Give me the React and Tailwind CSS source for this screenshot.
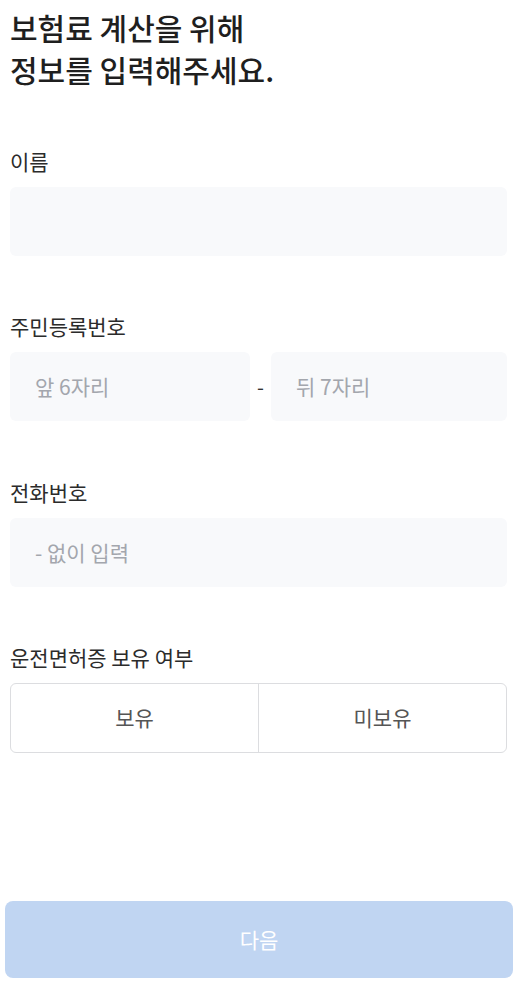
export default function App() {
  const font = { fontFamily: '"Noto Sans CJK KR", "Noto Sans", sans-serif' };

  return (
    <div
      className="flex min-h-[984px] w-[524px] flex-col bg-white"
      style={font}
    >
      <div className="flex flex-col pl-[10px] pr-[17px]">
        <h1 className="mt-[6px] text-[30px] font-medium leading-[42px] text-[#1f1f1f]">
          보험료 계산을 위해
          <br />
          정보를 입력해주세요.
        </h1>

        {/* 이름 */}
        <label className="mt-[57px] text-[21px] leading-[28px] text-[#2b2b2b]">이름</label>
        <div className="mt-[12px] h-[69px] rounded-[6px] bg-[#f8f9fb]" />

        {/* 주민등록번호 */}
        <label className="mt-[56px] text-[21px] leading-[28px] text-[#2b2b2b]">주민등록번호</label>
        <div className="mt-[12px] flex items-center">
          <div className="flex h-[69px] w-[240px] items-center rounded-[6px] bg-[#f8f9fb] pl-[25px] text-[21px] text-[#a3a6ad]">
            앞 6자리
          </div>
          <span className="flex-1 text-center text-[20px] text-[#333]">-</span>
          <div className="flex h-[69px] w-[236px] items-center rounded-[6px] bg-[#f8f9fb] pl-[25px] text-[21px] text-[#a3a6ad]">
            뒤 7자리
          </div>
        </div>

        {/* 전화번호 */}
        <label className="mt-[57px] text-[21px] leading-[28px] text-[#2b2b2b]">전화번호</label>
        <div className="mt-[12px] flex h-[69px] items-center rounded-[6px] bg-[#f8f9fb] pl-[25px] text-[21px] text-[#a3a6ad]">
          - 없이 입력
        </div>

        {/* 운전면허증 */}
        <label className="mt-[56px] text-[21px] leading-[28px] text-[#2b2b2b]">운전면허증 보유 여부</label>
        <div className="mt-[12px] flex h-[70px] rounded-[6px] border border-[#dcdde0]">
          <button className="flex-1 border-r border-[#dcdde0] text-[21px] text-[#555]">보유</button>
          <button className="flex-1 text-[21px] text-[#555]">미보유</button>
        </div>
      </div>

      <div className="flex-1" />

      <div className="pb-[6px] pl-[5px] pr-[11px]">
        <button className="h-[77px] w-full rounded-[8px] bg-[#c0d5f2] text-[21px] text-white">
          다음
        </button>
      </div>
    </div>
  );
}
